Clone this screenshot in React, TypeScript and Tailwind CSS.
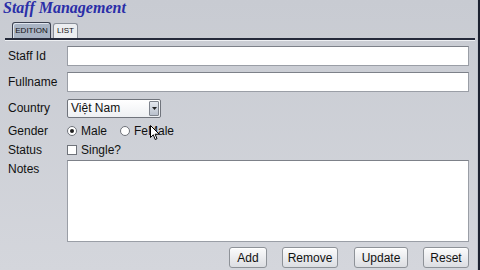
import React from "react";

const font = { fontFamily: '"Liberation Sans", Arial, sans-serif' };

function Label({ children }: { children: React.ReactNode }) {
  return <div className="w-[59px] shrink-0 text-[12px] text-[#111]">{children}</div>;
}

function Btn({ children, w }: { children: React.ReactNode; w: string }) {
  return (
    <button
      className={`${w} h-[21px] rounded-[3px] border border-[#8e9298] bg-gradient-to-b from-[#fbfbfc] to-[#dcdee2] text-[12px] text-[#111] shadow-[inset_0_1px_0_#fff]`}
    >
      {children}
    </button>
  );
}

export default function App() {
  return (
    <div
      className="relative flex h-[270px] w-[480px] overflow-hidden bg-gradient-to-b from-[#c8cbd2] to-[#d4d6dc]"
      style={font}
    >
      <div className="flex flex-1 flex-col">
        <div
          className="pl-[3px] text-[16px] font-bold italic leading-[16px] text-[#2a2ea8]"
          style={{ fontFamily: '"Liberation Serif", "Times New Roman", serif' }}
        >
          Staff Management
        </div>
        <div className="mt-[6px] flex items-end gap-[2px] pl-[12px]">
          <div className="flex h-[16px] w-[39px] items-center justify-center rounded-t-[3px] border border-b-0 border-[#3c4150] bg-[#a9b4c4] text-[8px] text-[#111] shadow-[inset_1px_1px_0_#dfe5ee]">
            EDITION
          </div>
          <div className="flex h-[15px] w-[25px] items-center justify-center rounded-t-[3px] border border-b-0 border-[#8a8f99] bg-[#eceef1] text-[8px] text-[#111]">
            LIST
          </div>
        </div>
        <div className="ml-[5px] mr-[2px] h-[2px] bg-[#252a3a]" />
        <div className="ml-[5px] mr-[2px] h-[1px] bg-[#eef0f3]" />

        <div className="flex flex-col pl-[8px] pr-[8px] pt-[2px]">
          <div className="flex h-[26px] items-center">
            <Label>Staff Id</Label>
            <div className="h-[20px] flex-1 border border-[#9a9ea6] border-t-[#7d8189] bg-white" />
          </div>
          <div className="flex h-[26px] items-center">
            <Label>Fullname</Label>
            <div className="h-[20px] flex-1 border border-[#9a9ea6] border-t-[#7d8189] bg-white" />
          </div>
          <div className="flex h-[26px] items-center">
            <Label>Country</Label>
            <div className="flex h-[19px] w-[94px] items-center justify-between rounded-[2px] border border-[#70747c] bg-gradient-to-b from-[#ffffff] to-[#eef0f3] pl-[3px] pr-[1px] text-[12px] text-[#111]">
              <span>Việt Nam</span>
              <div className="flex h-[15px] w-[10px] items-center justify-center rounded-[1px] border border-[#7e838c] bg-gradient-to-b from-[#e5e9ef] to-[#b9c0cc]">
                <svg width="5" height="3" viewBox="0 0 5 3">
                  <path d="M0 0h5L2.5 3z" fill="#222" />
                </svg>
              </div>
            </div>
          </div>
          <div className="flex h-[19px] items-center">
            <Label>Gender</Label>
            <div className="flex items-center gap-[3px] text-[12px] text-[#111]">
              <span className="flex h-[10px] w-[10px] items-center justify-center rounded-full border border-[#6f737a] bg-white">
                <span className="h-[4px] w-[4px] rounded-full bg-[#222]" />
              </span>
              <span className="ml-[1px]">Male</span>
              <span className="ml-[10px] h-[10px] w-[10px] rounded-full border border-[#6f737a] bg-white" />
              <span className="ml-[1px]">FeMale</span>
            </div>
          </div>
          <div className="flex h-[19px] items-center">
            <Label>Status</Label>
            <div className="flex items-center gap-[4px] text-[12px] text-[#111]">
              <span className="h-[10px] w-[10px] border border-[#6f737a] bg-white" />
              <span>Single?</span>
            </div>
          </div>
          <div className="mt-[1px] flex">
            <div className="w-[59px] shrink-0 text-[12px] text-[#111]">Notes</div>
            <div className="h-[82px] flex-1 border border-[#9a9ea6] border-t-[#7d8189] bg-white" />
          </div>
          <div className="mt-[5px] flex justify-end">
            <Btn w="w-[38px]">Add</Btn>
            <div className="w-[15px]" />
            <Btn w="w-[56px]">Remove</Btn>
            <div className="w-[16px]" />
            <Btn w="w-[54px]">Update</Btn>
            <div className="w-[15px]" />
            <Btn w="w-[46px]">Reset</Btn>
          </div>
        </div>
      </div>
      <div className="w-[1px] bg-[#c0c4cb]" />
      <div className="w-[2px] bg-[#1c2130]" />

      <svg className="absolute left-[150px] top-[125px]" width="10" height="16" viewBox="0 0 10 16">
        <path d="M0.5 0.5V12.5L3.3 9.8L5.2 14.5L7 13.7L5.1 9.2H9.2Z" fill="#fff" stroke="#000" strokeWidth="1" />
      </svg>
    </div>
  );
}
